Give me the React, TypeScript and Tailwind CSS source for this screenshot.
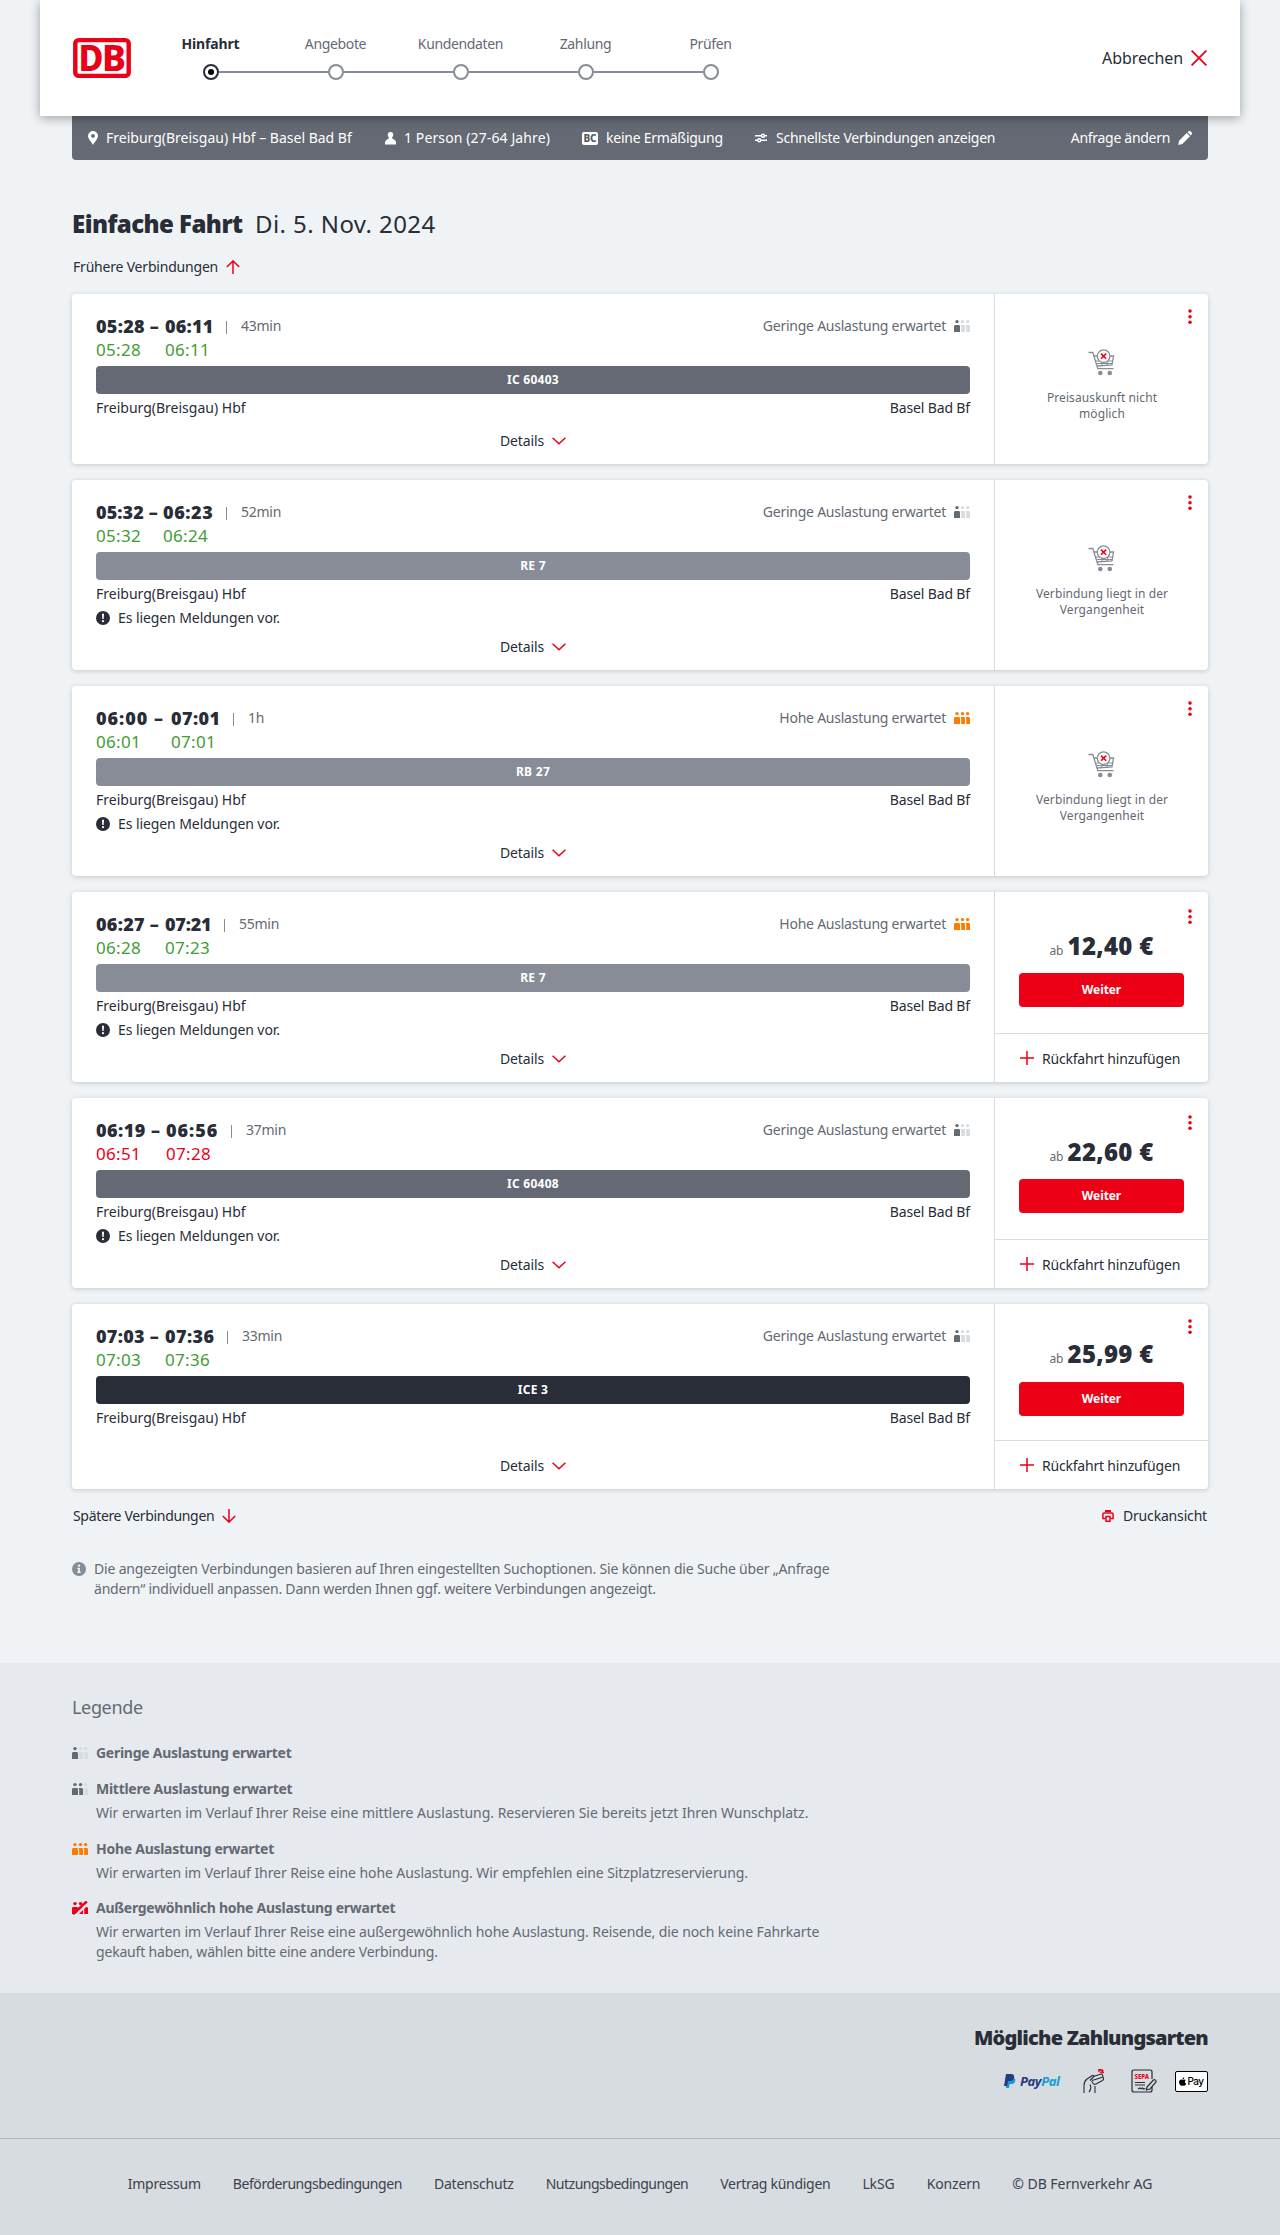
import React from "react";

type Level = "low" | "medium" | "high" | "full";

interface Connection {
  dep: string;
  arr: string;
  depClass: string;
  arrClass: string;
  duration: string;
  liveDep: string;
  liveArr: string;
  liveClass: string;
  load: Level;
  train: string;
  trainClass: string;
  message: boolean;
  height: string;
  price?: string;
  note?: [string, string];
  compact?: boolean;
}

const connections: Connection[] = [
  {
    dep: "05:28 –", arr: "06:11", depClass: "w-[69px] tracking-[0.3px]", arrClass: "w-[48px] tracking-[0.2px]",
    duration: "43min", liveDep: "05:28", liveArr: "06:11", liveClass: "text-[#3f9d34]",
    load: "low", train: "IC 60403", trainClass: "bg-[#646973]", message: false, height: "h-[170px]",
    note: ["Preisauskunft nicht", "möglich"],
  },
  {
    dep: "05:32 –", arr: "06:23", depClass: "w-[67px] tracking-[0.1px]", arrClass: "w-[50px] tracking-[0.6px]",
    duration: "52min", liveDep: "05:32", liveArr: "06:24", liveClass: "text-[#3f9d34]",
    load: "low", train: "RE 7", trainClass: "bg-[#878c96]", message: true, height: "h-[190px]",
    note: ["Verbindung liegt in der", "Vergangenheit"],
  },
  {
    dep: "06:00 –", arr: "07:01", depClass: "w-[75px] tracking-[1px]", arrClass: "w-[49px] tracking-[0.4px]",
    duration: "1h", liveDep: "06:01", liveArr: "07:01", liveClass: "text-[#3f9d34]",
    load: "high", train: "RB 27", trainClass: "bg-[#878c96]", message: true, height: "h-[190px]",
    note: ["Verbindung liegt in der", "Vergangenheit"],
  },
  {
    dep: "06:27 –", arr: "07:21", depClass: "w-[69px] tracking-[0.3px]", arrClass: "w-[46px] tracking-[-0.2px]",
    duration: "55min", liveDep: "06:28", liveArr: "07:23", liveClass: "text-[#3f9d34]",
    load: "high", train: "RE 7", trainClass: "bg-[#878c96]", message: true, height: "h-[190px]",
    price: "12,40 €",
  },
  {
    dep: "06:19 –", arr: "06:56", depClass: "w-[70px] tracking-[0.5px]", arrClass: "w-[52px] tracking-[1px]",
    duration: "37min", liveDep: "06:51", liveArr: "07:28", liveClass: "text-[#ec0016]",
    load: "low", train: "IC 60408", trainClass: "bg-[#646973]", message: true, height: "h-[190px]",
    price: "22,60 €",
  },
  {
    dep: "07:03 –", arr: "07:36", depClass: "w-[69px] tracking-[0.3px]", arrClass: "w-[49px] tracking-[0.4px]",
    duration: "33min", liveDep: "07:03", liveArr: "07:36", liveClass: "text-[#3f9d34]",
    load: "low", train: "ICE 3", trainClass: "bg-[#282d37]", message: false, height: "h-[185px]",
    price: "25,99 €", compact: true,
  },
];

function LoadIcon({ level }: { level: Level }) {
  const active = level === "high" ? "#ff7b00" : level === "full" ? "#ec0016" : "#646973";
  const idle = "#d7dce1";
  const count = level === "low" ? 1 : level === "medium" ? 2 : 3;
  const fill = (n: number) => (n <= count ? active : idle);
  return (
    <svg width="16" height="14" viewBox="0 0 16 14" className="shrink-0">
      <circle cx="3" cy="2.600" r="1.700" fill={fill(1)} />
      <path d="M0 13V7.500C0 6.500.7 6 1.500 6h3C5.400 6 6 6.500 6 7.500V13z" fill={fill(1)} />
      <circle cx="8.500" cy="2.600" r="1.700" fill={fill(2)} />
      <path d="M7 6h2.500C10.400 6 11 6.500 11 7.500V13H7.200V8q0-1.200-.8-2z" fill={fill(2)} />
      <circle cx="13.600" cy="2.600" r="1.700" fill={fill(3)} />
      <path d="M12 6h2.500c.9 0 1.500.5 1.500 1.500V13h-3.800V8q0-1.200-.8-2z" fill={fill(3)} />
      {level === "full" && (
        <>
          <path d="M3.500 14.500 17 1.500" stroke="#e6e9ee" strokeWidth="2.400" />
          <path d="M1 13.200 14.800.4" stroke="#ec0016" strokeWidth="2.400" />
        </>
      )}
    </svg>
  );
}

function CartIcon() {
  return (
    <svg width="27" height="27" viewBox="0 0 27 27" fill="none" stroke="#878c96" strokeWidth="1.300">
      <path d="M.5 3.500h4.300L9.800 19.600H25.500" />
      <path d="M5.900 7H25.500L24 15.800 9 17" />
      <path d="M7.500 12H24.500M8.500 14.500H24M13.500 12l.6 5M19.500 12l-.6 4.500" strokeWidth="1" />
      <circle cx="15.600" cy="7.200" r="6.300" fill="#fff" />
      <path d="m13 4.600 5.200 5.200m0-5.200-5.200 5.200" stroke="#ec0016" strokeWidth="1.500" />
      <circle cx="12.300" cy="24" r="2.300" fill="#878c96" stroke="none" />
      <circle cx="21.800" cy="24" r="2.300" fill="#878c96" stroke="none" />
    </svg>
  );
}

function DotsMenu() {
  return (
    <svg width="4" height="16" viewBox="0 0 4 16" fill="#ec0016">
      <circle cx="2" cy="2" r="1.800" />
      <circle cx="2" cy="7.700" r="1.800" />
      <circle cx="2" cy="13.200" r="1.800" />
    </svg>
  );
}

function ConnectionCard({ c }: { c: Connection }) {
  return (
    <article className={`flex rounded bg-white shadow-[0_1px_5px_rgba(0,0,0,0.18)] ${c.height}`}>
      <div className="flex w-[922px] flex-col px-6 pt-5 pb-[11px]">
        <div className="flex h-6 items-center">
          <div className="flex text-lg leading-6 font-black whitespace-nowrap">
            <span className={c.depClass}>{c.dep}</span>
            <span className={c.arrClass}>{c.arr}</span>
          </div>
          <span className="mt-0.5 ml-[13px] h-[13px] w-px bg-[#878c96]" />
          <span className="ml-[14px] tracking-[-0.25px] text-[#646973]">{c.duration}</span>
          <span className="mr-2 ml-auto tracking-[-0.24px] text-[#646973]">
            {c.load === "low" ? "Geringe Auslastung erwartet" : "Hohe Auslastung erwartet"}
          </span>
          <LoadIcon level={c.load} />
        </div>
        <div className={`flex h-6 items-center text-[17px] tracking-[0.3px] ${c.liveClass}`}>
          <span className={c.depClass}>
            <span className="tracking-[0.3px]">{c.liveDep}</span>
          </span>
          <span>{c.liveArr}</span>
        </div>
        <div
          className={`mt-1 flex h-7 items-center justify-center rounded text-xs font-bold tracking-[0.27px] text-white ${c.trainClass}`}
        >
          {c.train}
        </div>
        <div className="mt-1 flex h-5 items-center justify-between">
          <span>Freiburg(Breisgau) Hbf</span>
          <span className="tracking-[-0.14px]">Basel Bad Bf</span>
        </div>
        {c.message && (
          <div className="mt-0.5 flex h-6 items-center gap-2">
            <svg width="14" height="14" viewBox="0 0 14 14">
              <circle cx="7" cy="7" r="7" fill="#282d37" />
              <path d="M6 2.800h2L7.700 8H6.300z" fill="#fff" />
              <circle cx="7" cy="10.200" r="1.100" fill="#fff" />
            </svg>
            <span className="tracking-[-0.08px]">Es liegen Meldungen vor.</span>
          </div>
        )}
        <div className="mt-auto flex h-6 items-center justify-center gap-2">
          <span className="tracking-[-0.14px]">Details</span>
          <svg width="14" height="8" viewBox="0 0 14 8" fill="none" stroke="#ec0016" strokeWidth="1.500">
            <path d="m.6.8 6.400 6 6.400-6" />
          </svg>
        </div>
      </div>
      <div className="relative flex w-[214px] flex-col border-l border-[#d7dce1]">
        <div className={`absolute right-[16px] ${c.price && !c.compact ? "top-[17px]" : "top-[15px]"}`}>
          <DotsMenu />
        </div>
        {c.note && (
          <div className="flex flex-1 flex-col items-center justify-center pt-3">
            <CartIcon />
            <div className="mt-[14px] pl-px text-center text-xs leading-4 tracking-[0.1px] text-[#646973]">
              {c.note[0]}
              <br />
              {c.note[1]}
            </div>
          </div>
        )}
        {c.price && (
          <>
            <div className={`flex flex-1 flex-col items-center ${c.compact ? "gap-[10px] pt-8" : "gap-[9px] pt-9"}`}>
              <div className="flex h-9 items-baseline gap-1 leading-9">
                <span className="text-xs text-[#646973]">ab</span>
                <span className="text-2xl leading-9 font-black tracking-[0.3px]">{c.price}</span>
              </div>
              <button className="h-[34px] w-[165px] rounded bg-[#ec0016] text-xs font-bold tracking-[-0.1px] text-white">
                Weiter
              </button>
            </div>
            <div className="flex h-[49px] items-center gap-2 border-t border-[#d7dce1] pl-[25px]">
              <svg width="14" height="14" viewBox="0 0 14 14" stroke="#ec0016" strokeWidth="1.500">
                <path d="M7 0v14M0 7h14" />
              </svg>
              <span className="pt-0.5 tracking-[-0.2px]">Rückfahrt hinzufügen</span>
            </div>
          </>
        )}
      </div>
    </article>
  );
}

const steps = ["Hinfahrt", "Angebote", "Kundendaten", "Zahlung", "Prüfen"];

function Steps() {
  return (
    <ol className="ml-[17px] flex">
      {steps.map((s, i) => (
        <li key={s} className="flex w-[125px] flex-col items-center">
          <span className={`h-5 leading-5 ${i === 0 ? "font-bold tracking-[-0.15px]" : "tracking-[-0.35px] text-[#646973]"}`}>
            {s}
          </span>
          <div className="mt-[10px] flex w-full items-center">
            <span className={`h-0.5 flex-1 ${i === 0 ? "bg-transparent" : "bg-[#878c96]"}`} />
            {i === 0 ? (
              <span className="flex size-4 items-center justify-center rounded-full border-2 border-[#282d37]">
                <span className="size-1.5 rounded-full bg-black" />
              </span>
            ) : (
              <span className="size-4 rounded-full border-2 border-[#878c96]" />
            )}
            <span className={`h-0.5 flex-1 ${i === steps.length - 1 ? "bg-transparent" : "bg-[#878c96]"}`} />
          </div>
        </li>
      ))}
    </ol>
  );
}

function Header() {
  return (
    <header className="relative z-10 mx-10 flex h-[116px] bg-white px-[33px] shadow-[0_2px_10px_rgba(0,0,0,0.35)]">
      <svg width="58" height="40" viewBox="0 0 58 40" className="mt-[38px] shrink-0 overflow-visible">
        <rect x="2.300" y="2.100" width="53.400" height="35.800" rx="3.500" fill="#fff" stroke="#ec0016" strokeWidth="4.400" />
        <g fill="#ec0016" fontFamily="Noto Sans, sans-serif" fontWeight="800" fontSize="36">
          <text x="5.500" y="33" textLength="25" lengthAdjust="spacingAndGlyphs">D</text>
          <text x="29" y="33" textLength="24" lengthAdjust="spacingAndGlyphs">B</text>
        </g>
      </svg>
      <div className="pt-[34px]">
        <Steps />
      </div>
      <div className="mt-[46px] ml-auto flex h-6 items-center gap-2">
        <span className="text-base tracking-[-0.08px]">Abbrechen</span>
        <svg width="16" height="16" viewBox="0 0 16 16" stroke="#ec0016" strokeWidth="1.800">
          <path d="m.6.6 14.800 14.800m0-14.800L.6 15.400" />
        </svg>
      </div>
    </header>
  );
}

function SummaryBar() {
  return (
    <div className="mx-[72px] flex h-11 items-center rounded-b bg-[#646973] px-4 whitespace-nowrap text-white">
      <div className="flex w-[297px] items-center">
        <svg width="10" height="14" viewBox="0 0 10 14" className="mr-2">
          <path d="M5 0a5 5 0 0 1 5 4.800C10 8 6.500 11 5 14 3.500 11 0 8 0 4.800A5 5 0 0 1 5 0zm0 3a1.900 1.900 0 1 0 0 3.800A1.900 1.900 0 0 0 5 3z" fill="#fff" fillRule="evenodd" />
        </svg>
        <span>Freiburg(Breisgau) Hbf – Basel Bad Bf</span>
      </div>
      <div className="flex w-[197px] items-center">
        <svg width="11" height="13" viewBox="0 0 11 13" className="mr-2" fill="#fff">
          <path d="M5.500 0a2.700 2.700 0 0 1 2.700 2.800c0 1.400-.6 2.500-1.300 3.200l3 2.300c.7.500 1.100 1.200 1.100 2.200V12.500H0V10.500c0-1 .4-1.700 1.100-2.200l3-2.300C3.400 5.300 2.800 4.200 2.800 2.800A2.700 2.700 0 0 1 5.500 0z" />
        </svg>
        <span className="tracking-[0.11px]">1 Person (27-64 Jahre)</span>
      </div>
      <div className="flex w-[173px] items-center">
        <span className="mr-2 flex h-[13px] w-4 items-center justify-center rounded-xs bg-white text-[10px] leading-none font-extrabold text-[#555a64]">
          BC
        </span>
        <span className="tracking-[-0.24px]">keine Ermäßigung</span>
      </div>
      <div className="flex items-center">
        <svg width="12" height="10" viewBox="0 0 12 10" className="mr-[9px]" fill="none" stroke="#fff" strokeWidth="1.500">
          <path d="M0 2.800h6M9.500 2.800H12M0 7.200h2.500M6 7.200h6" />
          <circle cx="8" cy="2.800" r="1.500" />
          <circle cx="4.200" cy="7.200" r="1.500" />
        </svg>
        <span className="tracking-[-0.25px]">Schnellste Verbindungen anzeigen</span>
      </div>
      <div className="ml-auto flex items-center gap-2">
        <span className="tracking-[-0.3px]">Anfrage ändern</span>
        <svg width="14" height="14" viewBox="0 0 14 14" fill="#fff">
          <path d="M8.700 2 12 5.300 4.300 12.900.2 13.900 1.100 9.800zM9.600 1.200 10.700.3c.5-.5 1.200-.4 1.700 0l1.300 1.300c.4.500.5 1.200 0 1.700l-.9 1.100z" />
        </svg>
      </div>
    </div>
  );
}

function LegendRow({ level, title, children }: { level: Level; title: string; children?: React.ReactNode }) {
  return (
    <div className="mb-4 flex gap-2">
      <div className="flex h-5 items-center">
        <LoadIcon level={level} />
      </div>
      <div className="leading-5">
        <div className="font-bold tracking-[-0.27px]">{title}</div>
        {children && <div className="mt-1">{children}</div>}
      </div>
    </div>
  );
}

function PaymentLogos() {
  return (
    <div className="mt-[17px] flex h-6 items-center">
      <svg width="12" height="14" viewBox="0 0 12 14" className="mr-1">
        <path d="M3.600 3.500h4.600c2.300 0 3.400 1.200 3.100 3.200-.4 2.300-2 3.400-4.300 3.400H5.700L5 14H1.800z" fill="#179bd7" />
        <path d="M2 0h4.800c2.500 0 3.700 1.200 3.300 3.400C9.700 5.800 8 7 5.600 7H4L3.200 12H0z" fill="#253b80" />
      </svg>
      <span className="w-[41px] text-[13px] leading-5 font-bold tracking-[-0.4px] text-[#253b80] italic">
        Pay<span className="text-[#179bd7]">Pal</span>
      </span>
      <svg width="22" height="24" viewBox="0 0 22 24" className="ml-[22px]" fill="none" stroke="#282d37" strokeWidth="1.100">
        <path d="M1 24v-7.500c0-3 .8-4.800 3-6.500l5-3.300c1.300-.8 2.400.2 1.400 1.300L7 11.500" />
        <path d="m10.500 7.500 6.800-2.200c1.200-.4 2 0 2.300 1l.9 3c.3 1 0 1.600-1 2.200L13 15c-1.300.6-2.400.3-3-.7L8.500 12M9 11.500l10.500-3.300" />
        <path d="M6 23c1.500-1.500 2-3 1.800-5L7 15.500M12 24v-7" />
        <path d="M15.200 2.600c1.700-1.700 4.300-1.200 5.600 1.300M16.700 3.600c1-.7 2.300-.3 3 .9M15 .9c2-.7 4.200-.3 5.500 1.300" stroke="#ec0016" />
      </svg>
      <svg width="27" height="24" viewBox="0 0 27 24" className="ml-[26px]" fill="none" stroke="#282d37" strokeWidth="1.200">
        <path d="M21 10V3c0-1.500-.5-2-2-2H3c-1.500 0-2 .5-2 2v18c0 1.500.5 2 2 2h16c1.500 0 2-.5 2-2v-3M4 13.500h10M4 16h10M7 20l2-1 1 .7 1.500-.7 1 1 2-.5" />
        <path d="m16 18 6.500-7c1-.9 3.300.6 2.500 1.900L19 20l-3.500 1z" fill="#d7dce1" />
        <text x="3.600" y="10" fill="#ec0016" stroke="none" fontSize="7" fontWeight="800" fontFamily="Noto Sans, sans-serif" textLength="14.500" lengthAdjust="spacingAndGlyphs">
          SEPA
        </text>
      </svg>
      <div className="ml-[17px] flex h-[21px] w-[33px] items-center justify-center rounded-xs border border-black bg-white text-black">
        <svg width="7" height="9" viewBox="0 0 384 480" fill="currentColor">
          <path d="M319 254c0-37 17-64 50-84-19-27-47-42-84-44-36-3-74 21-88 21-15 0-49-20-76-20C65 128 4 172 4 263c0 27 5 55 15 83 13 38 61 131 111 130 26-1 45-19 79-19 33 0 50 19 79 19 50-1 94-85 106-123-68-32-75-94-75-99zM261 84c27-32 25-62 24-73-24 1-52 16-68 35-18 20-28 45-26 72 26 2 50-11 70-34z" />
        </svg>
        <span className="ml-px font-[Inter] text-[10px] leading-4 font-medium tracking-[-0.5px]">Pay</span>
      </div>
    </div>
  );
}

export default function App() {
  return (
    <div className="min-h-[2235px] bg-[#f0f3f5] font-['Noto_Sans',sans-serif] text-sm leading-5 text-[#282d37]">
      <Header />
      <SummaryBar />
      <main className="mx-[72px]">
        <h1 className="mt-12 flex h-8 items-center text-2xl whitespace-nowrap">
          <span className="w-[183px] font-black tracking-[-0.55px]">Einfache Fahrt</span>
          <span className="tracking-[0.42px]">Di. 5. Nov. 2024</span>
        </h1>
        <div className="mt-[17px] ml-px flex h-5 items-center gap-2">
          <span className="tracking-[-0.2px]">Frühere Verbindungen</span>
          <svg width="14" height="14" viewBox="0 0 14 14" fill="none" stroke="#ec0016" strokeWidth="1.500">
            <path d="M7 14V1M.8 7 7 .9 13.200 7" />
          </svg>
        </div>
        <section className="mt-[17px] flex flex-col gap-4">
          {connections.map((c) => (
            <ConnectionCard key={c.dep} c={c} />
          ))}
        </section>
        <div className="mt-[17px] flex h-5 items-center justify-between px-px">
          <div className="flex items-center gap-2">
            <span className="tracking-[-0.33px]">Spätere Verbindungen</span>
            <svg width="14" height="14" viewBox="0 0 14 14" fill="none" stroke="#ec0016" strokeWidth="1.500">
              <path d="M7 0v13M.8 7 7 13.100 13.200 7" />
            </svg>
          </div>
          <div className="flex items-center gap-[9px]">
            <svg width="12" height="12" viewBox="0 0 12 12" fill="none" stroke="#ec0016" strokeWidth="1.500">
              <path d="M3 1h6" strokeWidth="2" />
              <path d="M3.500 8.500H.9V4c0-.7.300-1 1-1h8.200c.7 0 1 .3 1 1v4.500H8.500" />
              <path d="M4 6.500h4v4.700H4z" />
            </svg>
            <span className="tracking-[-0.17px]">Druckansicht</span>
          </div>
        </div>
        <div className="mt-[33px] flex gap-2 text-[#646973]">
          <svg width="14" height="14" viewBox="0 0 14 14" className="mt-[3px] shrink-0">
            <circle cx="7" cy="7" r="7" fill="#878c96" />
            <circle cx="7" cy="3.600" r="1.200" fill="#f0f3f5" />
            <path d="M5.300 5.800h2.600v4h.9v1.200H5.300V9.800h.8V7h-.8z" fill="#f0f3f5" />
          </svg>
          <p className="tracking-[-0.18px] whitespace-nowrap">
            Die angezeigten Verbindungen basieren auf Ihren eingestellten Suchoptionen. Sie können die Suche über „Anfrage
            <br />
            <span className="tracking-[-0.21px]">
              ändern“ individuell anpassen. Dann werden Ihnen ggf. weitere Verbindungen angezeigt.
            </span>
          </p>
        </div>
      </main>
      <section className="mt-16 h-[330px] bg-[#e6e9ee] px-[72px] pt-8 whitespace-nowrap text-[#646973]">
        <h2 className="mb-6 h-6 text-lg leading-6 tracking-[-0.35px]">Legende</h2>
        <LegendRow level="low" title="Geringe Auslastung erwartet" />
        <LegendRow level="medium" title="Mittlere Auslastung erwartet">
          <span className="tracking-[-0.02px]">
            Wir erwarten im Verlauf Ihrer Reise eine mittlere Auslastung. Reservieren Sie bereits jetzt Ihren Wunschplatz.
          </span>
        </LegendRow>
        <LegendRow level="high" title="Hohe Auslastung erwartet">
          <span className="tracking-[-0.08px]">
            Wir erwarten im Verlauf Ihrer Reise eine hohe Auslastung. Wir empfehlen eine Sitzplatzreservierung.
          </span>
        </LegendRow>
        <div className="-mt-px">
          <LegendRow level="full" title="Außergewöhnlich hohe Auslastung erwartet">
            <span className="tracking-[-0.09px]">
              Wir erwarten im Verlauf Ihrer Reise eine außergewöhnlich hohe Auslastung. Reisende, die noch keine Fahrkarte
            </span>
            <br />
            <span className="tracking-[-0.18px]">gekauft haben, wählen bitte eine andere Verbindung.</span>
          </LegendRow>
        </div>
      </section>
      <footer className="h-[242px] bg-[#d7dce0]">
        <div className="flex h-[145px] flex-col items-end px-[72px] pt-[31px]">
          <h2 className="text-xl leading-7 font-black tracking-[-0.77px]">Mögliche Zahlungsarten</h2>
          <PaymentLogos />
        </div>
        <nav className="flex justify-center gap-8 border-t border-[#afb4bb] pt-[35px] whitespace-nowrap text-[#3c414b]">
          <a className="tracking-[-0.2px]">Impressum</a>
          <a className="tracking-[-0.44px]">Beförderungsbedingungen</a>
          <a className="tracking-[-0.2px]">Datenschutz</a>
          <a className="tracking-[-0.5px]">Nutzungsbedingungen</a>
          <a className="tracking-[-0.28px]">Vertrag kündigen</a>
          <a className="tracking-[-0.1px]">LkSG</a>
          <a className="tracking-[-0.15px]">Konzern</a>
          <a className="tracking-[-0.05px]">© DB Fernverkehr AG</a>
        </nav>
      </footer>
    </div>
  );
}
